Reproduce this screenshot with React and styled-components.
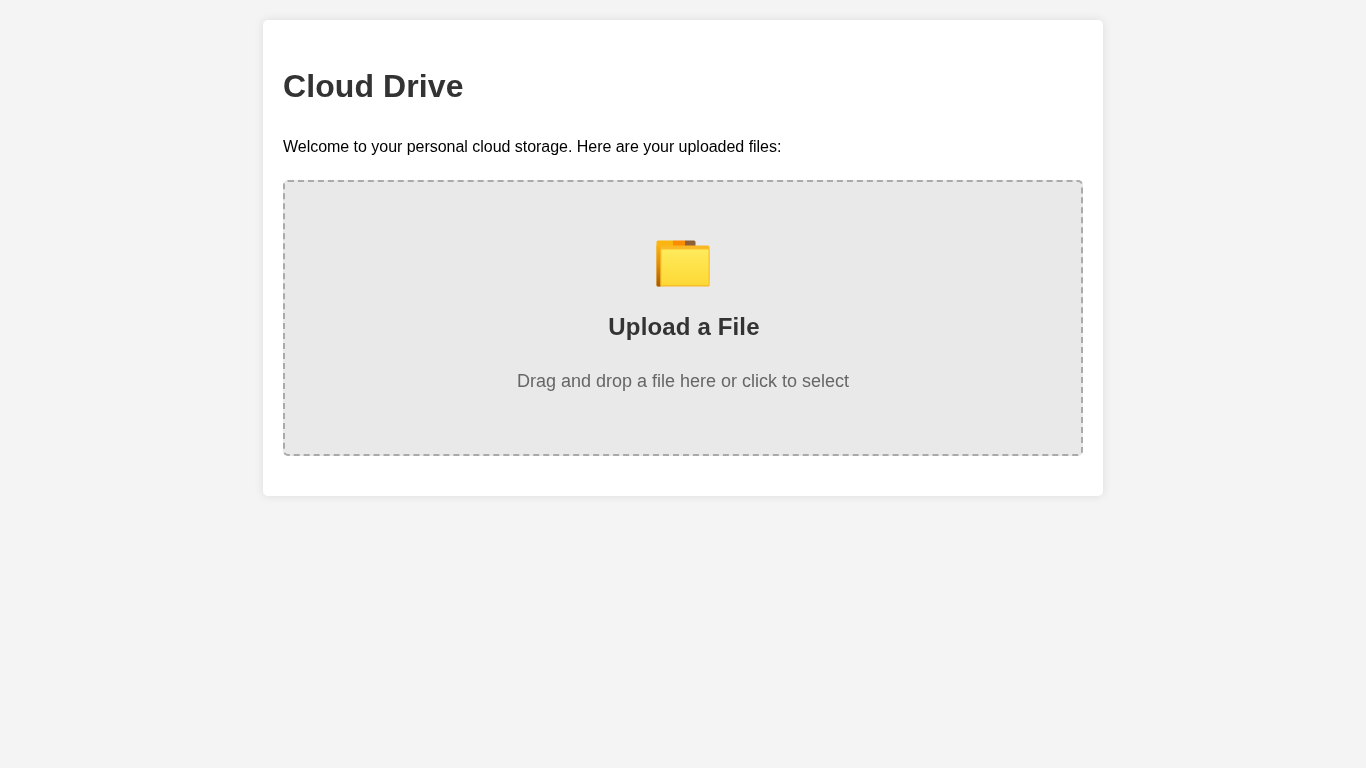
import React from "react";
import styled, { createGlobalStyle } from "styled-components";

const GlobalStyle = createGlobalStyle`
  body {
    margin: 0;
    background-color: #f4f4f4;
    font-family: "Liberation Sans", Arial, sans-serif;
    line-height: 1.6;
    text-rendering: optimizeSpeed;
  }
`;

const Container = styled.main`
  box-sizing: border-box;
  width: 840px;
  margin: 20px auto;
  padding: 20px 20px 40px;
  background-color: #fff;
  border-radius: 5px;
  box-shadow: 0 0 10px rgba(0, 0, 0, 0.1);
  will-change: transform;
`;

const Title = styled.h1`
  margin: 21.44px 0;
  font-size: 32px;
  letter-spacing: 0.09px;
  color: #333;
`;

const Intro = styled.p`
  margin: 0 0 20px;
  font-size: 16px;
  letter-spacing: -0.03px;
  color: #000;
`;

const DropZone = styled.div`
  box-sizing: border-box;
  height: 276px;
  padding: 40px;
  border: 2px dashed #aaa;
  border-radius: 5px;
  background-color: #e9e9e9;
  text-align: center;
  cursor: pointer;
`;

const IconSlot = styled.div`
  display: flex;
  justify-content: center;
  align-items: flex-end;
  height: 66px;
`;

const ZoneTitle = styled.h2`
  margin: 19.92px 0;
  padding-left: 2px;
  font-size: 24px;
  letter-spacing: 0.15px;
  color: #333;
`;

const ZoneHint = styled.p`
  margin: 21px 0 18px;
  font-size: 18px;
  color: #666;
`;

const FolderIcon = () => (
  <svg width="54" height="48" viewBox="0 0 54 48" aria-hidden="true">
    <defs>
      <linearGradient id="folderFront" x1="0" y1="0" x2="0" y2="1">
        <stop offset="0" stopColor="#ffeb5c" />
        <stop offset="1" stopColor="#fdd835" />
      </linearGradient>
      <linearGradient id="folderSide" x1="0" y1="0" x2="0" y2="1">
        <stop offset="0" stopColor="#f9b115" />
        <stop offset="0.45" stopColor="#e08e0b" />
        <stop offset="1" stopColor="#a65a08" />
      </linearGradient>
    </defs>
    <path d="M29 .5h9a1.500 1.500 0 0 1 1.500 1.500V7H29z" fill="#8d6038" />
    <path d="M17 .5h12V7H17z" fill="#fb8c00" />
    <path d="M2 .5h15V7H.5V2A1.500 1.500 0 0 1 2 .5z" fill="#fbb50f" />
    <path d="M.5 5.500h51.500a1.500 1.500 0 0 1 1.500 1.500V45.500a1 1 0 0 1-1 1H2A1.500 1.500 0 0 1 .5 45z" fill="#f9b824" />
    <path d="M.5 5.500H4.500v41H2A1.500 1.500 0 0 1 .5 45z" fill="url(#folderSide)" />
    <path d="M5 9h47a1 1 0 0 1 1 1V45.500H5z" fill="url(#folderFront)" stroke="#f9c02c" />
  </svg>
);

export default function App() {
  return (
    <>
      <GlobalStyle />
      <Container>
        <Title>Cloud Drive</Title>
        <Intro>Welcome to your personal cloud storage. Here are your uploaded files:</Intro>
        <DropZone>
          <IconSlot>
            <FolderIcon />
          </IconSlot>
          <ZoneTitle>Upload a File</ZoneTitle>
          <ZoneHint>Drag and drop a file here or click to select</ZoneHint>
        </DropZone>
      </Container>
    </>
  );
}
